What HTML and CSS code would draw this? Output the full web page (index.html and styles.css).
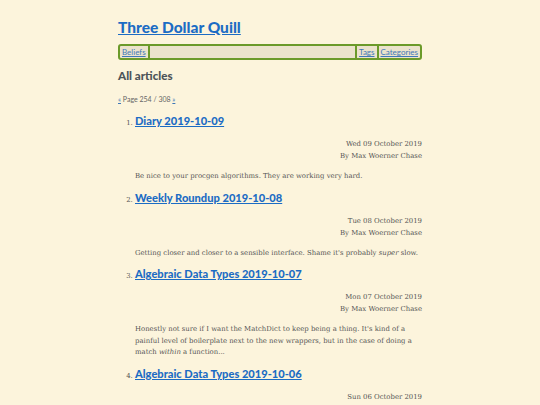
FILE: index.html
```html
<!DOCTYPE html>
<html>
<head>
<meta charset="utf-8">
<link rel="stylesheet" href="styles.css">
</head>
<body>
<div class="page">
  <h1 class="site-title"><a href="#">Three Dollar Quill</a></h1>
  <nav class="nav">
    <a class="nav-item first" href="#">Beliefs</a>
    <span class="nav-spacer"></span>
    <a class="nav-item sep" href="#">Tags</a>
    <a class="nav-item sep" href="#">Categories</a>
  </nav>
  <h2 class="section-title">All articles</h2>
  <p class="pager"><a href="#">«</a> Page 254 / 308 <a href="#">»</a></p>
  <ol class="articles">
    <li class="article">
      <h3 class="article-title"><a href="#">Diary 2019-10-09</a></h3>
      <div class="meta">
        <div>Wed 09 October 2019</div>
        <div>By Max Woerner Chase</div>
      </div>
      <p class="summary">Be nice to your procgen algorithms. They are working very hard.</p>
    </li>
    <li class="article">
      <h3 class="article-title"><a href="#">Weekly Roundup 2019-10-08</a></h3>
      <div class="meta">
        <div>Tue 08 October 2019</div>
        <div>By Max Woerner Chase</div>
      </div>
      <p class="summary">Getting closer and closer to a sensible interface. Shame it's probably <em>super</em> slow.</p>
    </li>
    <li class="article">
      <h3 class="article-title"><a href="#">Algebraic Data Types 2019-10-07</a></h3>
      <div class="meta">
        <div>Mon 07 October 2019</div>
        <div>By Max Woerner Chase</div>
      </div>
      <p class="summary">Honestly not sure if I want the MatchDict to keep being a thing. It's kind of a painful level of boilerplate next to the new wrappers, but in the case of doing a match <em>within</em> a function...</p>
    </li>
    <li class="article">
      <h3 class="article-title"><a href="#">Algebraic Data Types 2019-10-06</a></h3>
      <div class="meta">
        <div>Sun 06 October 2019</div>
        <div>By Max Woerner Chase</div>
      </div>
      <p class="summary">More work.</p>
    </li>
  </ol>
</div>
</body>
</html>
```
FILE: styles.css
```css
html, body {
  margin: 0;
  padding: 0;
  background: #fcf4dc;
}
body {
  font-family: "DejaVu Serif", serif;
  color: #4a4a4a;
}
.page {
  width: 304px;
  margin: 0 auto;
  padding-top: 15px;
}
.site-title {
  margin: 0;
  font-family: "Lato", "Open Sans", sans-serif;
  font-weight: 900;
  font-size: 15.5px;
  line-height: 24px;
}
.site-title a {
  color: #1c6cc4;
}
.nav {
  display: flex;
  align-items: stretch;
  margin-top: 5px;
  height: 12px;
  border: 2px solid #6b9a2a;
  border-radius: 3px;
  background: #ebe3cc;
  font-family: "Lato", sans-serif;
  font-size: 8px;
  line-height: 12px;
}
.nav-item {
  color: #3f78b8;
  padding: 0 2px;
}
.nav-item.first {
  border-right: 2px solid #6b9a2a;
}
.nav-item.sep {
  border-left: 2px solid #6b9a2a;
}
.nav-spacer {
  flex: 1;
}
.section-title {
  margin: 8px 0 0 0;
  font-family: "Lato", sans-serif;
  font-weight: 900;
  font-size: 11.6px;
  line-height: 16px;
  color: #4c5358;
}
.pager {
  margin: 10px 0 0 0;
  font-family: "Lato", sans-serif;
  font-size: 7px;
  line-height: 10px;
  color: #666;
}
.pager a {
  color: #3f78b8;
}
.articles {
  margin: 9px 0 0 0;
  padding-left: 17px;
}
.article {
  font-size: 6.9px;
  color: #555;
}
.article-title {
  margin: 0;
  font-family: "Lato", sans-serif;
  font-weight: 900;
  font-size: 11.1px;
  line-height: 16px;
}
.article-title a {
  color: #1c6cc4;
}
.meta {
  margin-top: 9px;
  text-align: right;
  font-size: 6.9px;
  line-height: 12px;
  color: #555;
}
.summary {
  margin: 9px 0 7px 0;
  font-size: 6.9px;
  line-height: 11.5px;
  color: #555;
}
```
